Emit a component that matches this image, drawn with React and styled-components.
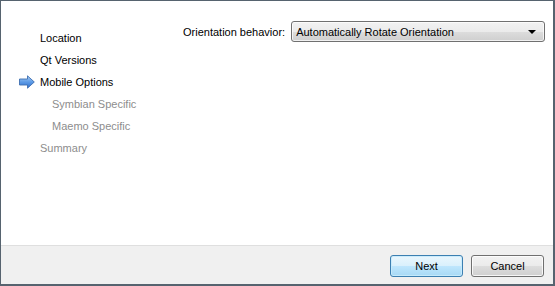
import React from 'react';
import styled, { createGlobalStyle } from 'styled-components';

const Global = createGlobalStyle`
  html, body { margin: 0; padding: 0; background: #ffffff; }
  body { font-family: "Liberation Sans", Arial, sans-serif; font-size: 11px; color: #000; }
`;

const Window = styled.div`
  width: 555px;
  height: 286px;
  box-sizing: border-box;
  border-style: solid;
  border-color: #56636f;
  border-width: 1px 2px 2px 1px;
  display: flex;
  flex-direction: column;
  background: #ffffff;
`;

const Body = styled.div`
  flex: 1;
  display: flex;
`;

const Sidebar = styled.ul`
  list-style: none;
  margin: 0;
  padding: 26px 0 0 18px;
  width: 154px;
`;

const Step = styled.li`
  display: flex;
  align-items: center;
  height: 22px;
  padding-left: ${p => (p.$sub ? 12 : 0)}px;
  color: ${p => (p.$done || p.$active ? '#000000' : '#8d8d8d')};
`;

const Marker = styled.span`
  width: 21px;
  display: flex;
  align-items: center;
`;

const Content = styled.div`
  flex: 1;
  padding: 20px 8px 0 10px;
`;

const Row = styled.div`
  display: flex;
  align-items: center;
  gap: 6px;
`;

const Label = styled.span`
  white-space: nowrap;
`;

const Combo = styled.div`
  flex: 1;
  height: 21px;
  box-sizing: border-box;
  border: 1px solid #707070;
  border-radius: 3px;
  background: linear-gradient(#f2f2f2 0%, #ebebeb 50%, #dddddd 51%, #cfcfcf 100%);
  box-shadow: inset 0 0 0 1px rgba(255, 255, 255, 0.7);
  display: flex;
  align-items: center;
  justify-content: space-between;
  padding: 0 8px 0 4px;
`;

const Caret = styled.span`
  width: 0;
  height: 0;
  border-left: 4px solid transparent;
  border-right: 4px solid transparent;
  border-top: 4px solid #000;
`;

const Footer = styled.div`
  height: 39px;
  box-sizing: border-box;
  border-top: 1px solid #dfdfdf;
  background: #f0f0f0;
  display: flex;
  justify-content: flex-end;
  align-items: flex-start;
  gap: 8px;
  padding: 9px 9px 0 0;
`;

const Button = styled.button`
  width: 73px;
  height: 22px;
  font: inherit;
  color: #000;
  border: 1px solid ${p => (p.$default ? '#3c7fb1' : '#707070')};
  border-radius: 3px;
  background: ${p =>
    p.$default
      ? 'linear-gradient(#eaf6fd 0%, #d9f0fc 50%, #bee6fd 51%, #a7d9f5 100%)'
      : 'linear-gradient(#f2f2f2 0%, #ebebeb 50%, #dddddd 51%, #cfcfcf 100%)'};
  box-shadow: inset 0 0 0 1px ${p => (p.$default ? 'rgba(200, 235, 252, 0.9)' : 'rgba(255,255,255,0.8)')};
  padding: 0;
`;

const Arrow = () => (
  <svg width="16" height="14" viewBox="0 0 16 14">
    <defs>
      <linearGradient id="ag" x1="0" y1="0" x2="0" y2="1">
        <stop offset="0" stopColor="#a9cdf5" />
        <stop offset="0.5" stopColor="#5d9be6" />
        <stop offset="1" stopColor="#2f6fcf" />
      </linearGradient>
    </defs>
    <path d="M0.5 4 H8.5 V0.8 L15.3 7 L8.5 13.2 V10 H0.5 Z" fill="url(#ag)" stroke="#3f6fb0" strokeWidth="0.9" strokeLinejoin="round" />
  </svg>
);

const steps = [
  { name: 'Location', done: true },
  { name: 'Qt Versions', done: true },
  { name: 'Mobile Options', active: true },
  { name: 'Symbian Specific', sub: true },
  { name: 'Maemo Specific', sub: true },
  { name: 'Summary' },
];

export default function App() {
  return (
    <Window>
      <Global />
      <Body>
        <Sidebar>
          {steps.map(s => (
            <Step key={s.name} $sub={s.sub} $done={s.done} $active={s.active}>
              <Marker>{s.active && <Arrow />}</Marker>
              {s.name}
            </Step>
          ))}
        </Sidebar>
        <Content>
          <Row>
            <Label>Orientation behavior:</Label>
            <Combo>
              <span>Automatically Rotate Orientation</span>
              <Caret />
            </Combo>
          </Row>
        </Content>
      </Body>
      <Footer>
        <Button $default>Next</Button>
        <Button>Cancel</Button>
      </Footer>
    </Window>
  );
}
